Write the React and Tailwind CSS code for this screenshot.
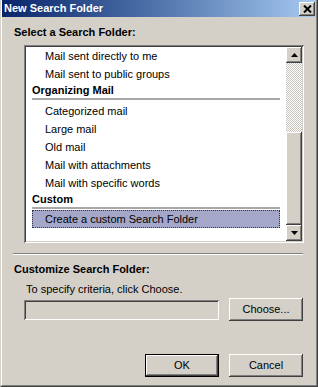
import React from 'react';

const raised =
    'shadow-[inset_-1px_-1px_#404040,inset_1px_1px_#ffffff,inset_-2px_-2px_#808080,inset_2px_2px_#d4d0c8]';
const sunken =
    'shadow-[inset_1px_1px_#808080,inset_-1px_-1px_#ffffff,inset_2px_2px_#404040,inset_-2px_-2px_#d4d0c8]';

function Item({ children }) {
    return <div className="h-[18px] leading-[18px] pl-[13px] whitespace-nowrap">{children}</div>;
}

function Group({ children }) {
    return (
        <div className="h-[18px]">
            <div className="font-bold leading-[15px] whitespace-nowrap">{children}</div>
            <div className="h-[2px] bg-[#a8a8a8]" />
        </div>
    );
}

function Arrow({ down }) {
    return (
        <svg width="7" height="4" viewBox="0 0 7 4" className="block">
            {down ? <polygon points="0,0 7,0 3.5,4" fill="#000" /> : <polygon points="0,4 7,4 3.5,0" fill="#000" />}
        </svg>
    );
}

function Button({ children, isDefault }) {
    const inner = (
        <div className={`w-full h-full flex items-center justify-center bg-[#d4d0c8] ${raised}`}>
            {children}
        </div>
    );
    if (isDefault) {
        return <div className="w-[74px] h-[23px] border border-black">{inner}</div>;
    }
    return <div className="w-[74px] h-[23px]">{inner}</div>;
}

export default function App() {
    return (
        <div className="w-[318px] h-[387px] bg-[#d4d0c8] text-black text-[11px] font-['Liberation_Sans',Tahoma,Arial,sans-serif] border-l border-l-[#d4d0c8] border-r border-r-[#404040] border-b border-b-[#404040] overflow-hidden">
            <div className="h-full flex flex-col border-l border-l-white border-r border-r-[#808080] border-b border-b-[#808080]">
                {/* title bar */}
                <div className="h-[17px] shrink-0 flex items-center pl-[2px] bg-linear-to-r from-[#0a246a] to-[#a6caf0]">
                    <span className="text-white font-bold leading-[17px]">New Search Folder</span>
                    <div className={`ml-auto mr-[1px] w-[16px] h-[14px] bg-[#d4d0c8] flex items-center justify-center ${raised}`}>
                        <svg width="9" height="8" viewBox="0 0 9 8" className="block">
                            <path d="M1 0.5 L8 7.5 M8 0.5 L1 7.5" stroke="#000" strokeWidth="2" />
                        </svg>
                    </div>
                </div>

                <div className="mt-[8px] ml-[12px] font-bold leading-[14px]">Select a Search Folder:</div>

                {/* list */}
                <div className={`mt-[6px] ml-[22px] w-[280px] h-[198px] p-[2px] bg-white ${sunken}`}>
                    <div className="h-full flex">
                        <div className="flex-1 px-[6px] overflow-hidden">
                            <Item>Mail sent directly to me</Item>
                            <Item>Mail sent to public groups</Item>
                            <Group>Organizing Mail</Group>
                            <div className="h-px" />
                            <Item>Categorized mail</Item>
                            <Item>Large mail</Item>
                            <Item>Old mail</Item>
                            <Item>Mail with attachments</Item>
                            <Item>Mail with specific words</Item>
                            <Group>Custom</Group>
                            <div className="h-[18px] leading-[16px] pl-[12px] bg-[#a5a7c8] border border-dotted border-[#303040] whitespace-nowrap">
                                Create a custom Search Folder
                            </div>
                        </div>
                        <div className="w-[16px] flex flex-col">
                            <div className={`h-[16px] bg-[#d4d0c8] flex items-center justify-center ${raised}`}>
                                <Arrow />
                            </div>
                            <div className="h-[69px] bg-[repeating-conic-gradient(#c8c4bc_0%_25%,#ffffff_0%_50%)] bg-[length:2px_2px]" />
                            <div className={`flex-1 bg-[#d4d0c8] ${raised}`} />
                            <div className={`h-[16px] bg-[#d4d0c8] flex items-center justify-center ${raised}`}>
                                <Arrow down />
                            </div>
                        </div>
                    </div>
                </div>

                {/* etched separator */}
                <div className="mt-[10px] ml-[11px] w-[290px] border-t border-t-[#808080] border-b border-b-white" />

                <div className="mt-[7px] ml-[12px] font-bold leading-[14px]">Customize Search Folder:</div>
                <div className="mt-[6px] ml-[24px] leading-[14px]">To specify criteria, click Choose.</div>

                <div className="mt-[2px] ml-[22px] flex items-center gap-[10px]">
                    <div className={`w-[195px] h-[20px] bg-[#d4d0c8] ${sunken}`} />
                    <Button>Choose...</Button>
                </div>

                <div className="mt-[33px] ml-[143px] flex gap-[10px]">
                    <Button isDefault>OK</Button>
                    <Button>Cancel</Button>
                </div>
            </div>
        </div>
    );
}
